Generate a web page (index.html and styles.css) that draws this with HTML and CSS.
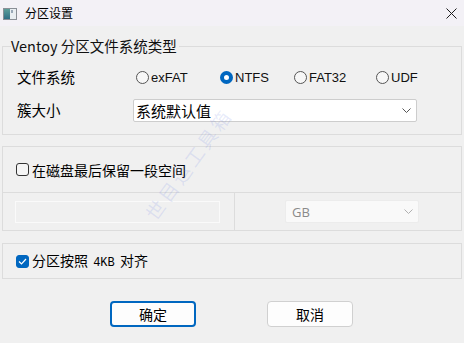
FILE: index.html
```html
<!DOCTYPE html>
<html lang="zh-CN">
<head>
    <meta charset="UTF-8">
    <title>分区设置</title>
    <link rel="stylesheet" href="styles.css">
</head>
<body>
    <div class="window">
        <div class="titlebar">
            <svg class="app-icon" width="14" height="12" viewBox="0 0 14 12">
                <defs>
                    <linearGradient id="pane" x1="0" y1="0" x2="0" y2="1">
                        <stop offset="0" stop-color="#5c9e9a"/>
                        <stop offset="1" stop-color="#2f6f86"/>
                    </linearGradient>
                </defs>
                <rect x="0.5" y="0.5" width="13" height="11" fill="#e9eef2" stroke="#8a8f96"/>
                <rect x="1" y="1" width="6" height="10" fill="url(#pane)"/>
                <rect x="8" y="2" width="2" height="3" fill="#9aa9b8"/>
            </svg>
            <span class="title">分区设置</span>
            <svg class="close" width="11" height="11" viewBox="0 0 11 11">
                <path d="M0.5 0.5 L10.5 10.5 M10.5 0.5 L0.5 10.5" stroke="#1c1c1c" stroke-width="1"/>
            </svg>
        </div>

        <div class="content">
            <fieldset class="group fs-group">
                <legend>Ventoy 分区文件系统类型</legend>
                <div class="form-row">
                    <span class="label">文件系统</span>
                    <div class="radios">
                        <label class="radio"><span class="dot"></span>exFAT</label>
                        <label class="radio checked"><span class="dot"></span>NTFS</label>
                        <label class="radio"><span class="dot"></span>FAT32</label>
                        <label class="radio"><span class="dot"></span>UDF</label>
                    </div>
                </div>
                <div class="form-row">
                    <span class="label">簇大小</span>
                    <div class="select">
                        <span>系统默认值</span>
                        <svg width="9" height="5" viewBox="0 0 9 5"><path d="M0.5 0.5 L4.5 4.5 L8.5 0.5" fill="none" stroke="#555" stroke-width="1"/></svg>
                    </div>
                </div>
            </fieldset>

            <div class="group reserve">
                <div class="reserve-top">
                    <label class="check"><span class="box"></span><span>在磁盘最后保留一段空间</span></label>
                </div>
                <div class="reserve-bottom">
                    <div class="cell">
                        <div class="input disabled"></div>
                    </div>
                    <div class="cell cell-right">
                        <div class="select disabled small">
                            <span>GB</span>
                            <svg width="9" height="5" viewBox="0 0 9 5"><path d="M0.5 0.5 L4.5 4.5 L8.5 0.5" fill="none" stroke="#b0b0b0" stroke-width="1"/></svg>
                        </div>
                    </div>
                </div>
            </div>

            <div class="group align">
                <label class="check checked">
                    <span class="box">
                        <svg width="9" height="7" viewBox="0 0 9 7"><path d="M1 3.5 L3.5 6 L8 1" fill="none" stroke="#fff" stroke-width="1.2"/></svg>
                    </span>
                    <span>分区按照 <span class="mono">4KB</span> 对齐</span>
                </label>
            </div>

            <div class="buttons">
                <button class="btn primary">确定</button>
                <button class="btn">取消</button>
            </div>
        </div>

        <div class="watermark">世目运工具箱</div>
    </div>
</body>
</html>
```

FILE: styles.css
```css
* {
    box-sizing: border-box;
}
body {
    margin: 0;
    background: #f0f0f0;
    font-family: "Noto Sans CJK SC", sans-serif;
    color: #000;
}
.window {
    position: relative;
    width: 464px;
    height: 343px;
    overflow: hidden;
}

/* title bar */
.titlebar {
    height: 26px;
    background: #f3f1f6;
    display: flex;
    align-items: center;
    padding-left: 3px;
}
.app-icon {
    margin-top: 1px;
}
.title {
    font-size: 12px;
    margin-left: 8px;
    line-height: 1;
}
.close {
    margin-left: auto;
    margin-right: 7px;
    margin-top: 1px;
}

.content {
    padding: 0 2px;
}
.group {
    border: 1px solid #dcdcdc;
    margin: 0;
}

/* file system group */
.fs-group {
    margin-top: 10px;
    padding: 9px 14px 12px 14px;
    min-width: 0;
}
.fs-group legend {
    font-size: 14.5px;
    line-height: 20px;
    padding: 0 2px 0 0;
    margin-left: -6px;
    color: #111;
}
.form-row {
    display: flex;
    align-items: center;
}
.form-row + .form-row {
    margin-top: 9px;
}
.label {
    width: 116px;
    font-size: 14.5px;
    line-height: 24px;
}
.radios {
    display: flex;
    height: 24px;
    align-items: center;
}
.radio {
    display: flex;
    align-items: center;
    font-family: "Liberation Sans", sans-serif;
    font-size: 13px;
    color: #111;
}
.radio:nth-child(1) { width: 84px; margin-left: 3px; }
.radio:nth-child(2) { width: 74px; }
.radio:nth-child(3) { width: 82px; }
.dot {
    width: 13px;
    height: 13px;
    border: 1px solid #555;
    border-radius: 50%;
    background: #f7f7f7;
    margin-right: 2px;
}
.radio.checked .dot {
    border: 4px solid #0067c0;
    background: #fff;
}

.select {
    width: 284px;
    height: 23px;
    background: #fff;
    border: 1px solid #cdcdcd;
    border-radius: 2px;
    display: flex;
    align-items: center;
    justify-content: space-between;
    padding: 0 5px 0 2px;
    font-size: 15px;
}

/* reserve space group */
.reserve {
    margin-top: 11px;
}
.reserve-top {
    height: 46px;
    border-bottom: 1px solid #dcdcdc;
    display: flex;
    align-items: center;
    padding-left: 13px;
}
.reserve-bottom {
    display: grid;
    grid-template-columns: 231px 1fr;
    height: 37px;
}
.cell {
    display: flex;
    align-items: center;
    padding-left: 12px;
}
.cell-right {
    border-left: 1px solid #dcdcdc;
    padding-left: 50px;
}
.input.disabled {
    width: 205px;
    height: 22px;
    border: 1px solid #fafafa;
    background: #f0f0f0;
}
.select.disabled {
    background: #f9f9f9;
    border: 1px solid #ececec;
    color: #8a8a8a;
    font-family: "Open Sans", sans-serif;
    font-size: 13px;
    padding-left: 6px;
}
.select.small {
    width: 134px;
    height: 23px;
}

.check {
    display: flex;
    align-items: center;
    font-size: 14px;
    line-height: 20px;
}
.box {
    width: 13px;
    height: 13px;
    border: 1px solid #333;
    border-radius: 3px;
    background: #f5f5f5;
    margin-right: 3px;
    display: flex;
    align-items: center;
    justify-content: center;
}
.check.checked .box {
    background: #0067c0;
    border-color: #0067c0;
}
.mono {
    font-family: "Liberation Mono", monospace;
    font-size: 12px;
    margin: 0 2px;
}

/* 4KB align group */
.align {
    margin-top: 12px;
    height: 36px;
    display: flex;
    align-items: center;
    padding-left: 13px;
}

.buttons {
    display: flex;
    gap: 71px;
    margin-top: 22px;
    padding-left: 108px;
}
.btn {
    width: 86px;
    height: 26px;
    background: #fdfdfd;
    border: 1px solid #d0d0d0;
    border-radius: 4px;
    font-family: "Noto Sans CJK SC", sans-serif;
    font-size: 14px;
    color: #000;
    padding: 0;
}
.btn.primary {
    border: 2px solid #0067c0;
}

.watermark {
    position: absolute;
    left: 122px;
    top: 150px;
    transform: rotate(-54deg);
    font-size: 19px;
    letter-spacing: 3px;
    color: rgba(110, 130, 230, 0.16);
    white-space: nowrap;
}
```
